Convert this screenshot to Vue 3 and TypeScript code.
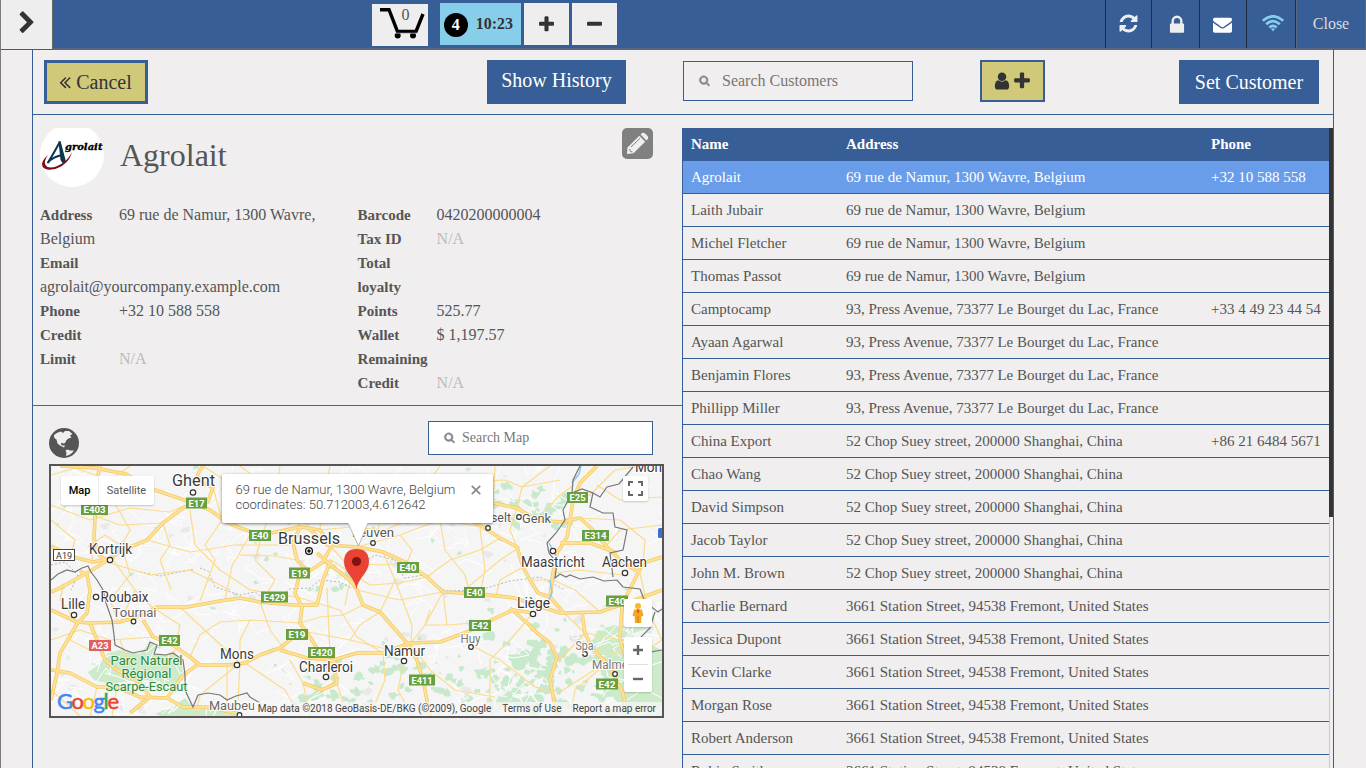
<script setup lang="ts">
interface Customer { name: string; address: string; phone?: string }
interface Field { label: string; value?: string }
interface Place { t: string; x: number; y: number; w: number; s: number; dx?: number; dy?: number; c?: string }
interface Shield { t: string; x: number; y: number; w: number; c?: string }

const namur = '69 rue de Namur, 1300 Wavre, Belgium'
const press = '93, Press Avenue, 73377 Le Bourget du Lac, France'
const suey = '52 Chop Suey street, 200000 Shanghai, China'
const station = '3661 Station Street, 94538 Fremont, United States'

const customers: Customer[] = [
  { name: 'Agrolait', address: namur, phone: '+32 10 588 558' },
  { name: 'Laith Jubair', address: namur },
  { name: 'Michel Fletcher', address: namur },
  { name: 'Thomas Passot', address: namur },
  { name: 'Camptocamp', address: press, phone: '+33 4 49 23 44 54' },
  { name: 'Ayaan Agarwal', address: press },
  { name: 'Benjamin Flores', address: press },
  { name: 'Phillipp Miller', address: press },
  { name: 'China Export', address: suey, phone: '+86 21 6484 5671' },
  { name: 'Chao Wang', address: suey },
  { name: 'David Simpson', address: suey },
  { name: 'Jacob Taylor', address: suey },
  { name: 'John M. Brown', address: suey },
  { name: 'Charlie Bernard', address: station },
  { name: 'Jessica Dupont', address: station },
  { name: 'Kevin Clarke', address: station },
  { name: 'Morgan Rose', address: station },
  { name: 'Robert Anderson', address: station },
  { name: 'Robin Smith', address: station },
]

const leftFields: Field[] = [
  { label: 'Address', value: '69 rue de Namur, 1300 Wavre, Belgium' },
  { label: 'Email', value: 'agrolait@yourcompany.example.com' },
  { label: 'Phone', value: '+32 10 588 558' },
  { label: 'Credit Limit' },
]
const rightFields: Field[] = [
  { label: 'Barcode', value: '0420200000004' },
  { label: 'Tax ID' },
  { label: 'Total loyalty Points', value: '525.77' },
  { label: 'Wallet', value: '$ 1,197.57' },
  { label: 'Remaining Credit' },
]

const icons = {
  plus: 'M1600 736v192q0 40-28 68t-68 28h-416v416q0 40-28 68t-68 28h-192q-40 0-68-28t-28-68v-416h-416q-40 0-68-28t-28-68v-192q0-40 28-68t68-28h416v-416q0-40 28-68t68-28h192q40 0 68 28t28 68v416h416q40 0 68 28t28 68z',
  minus: 'M1600 736v192q0 40-28 68t-68 28h-1216q-40 0-68-28t-28-68v-192q0-40 28-68t68-28h1216q40 0 68 28t28 68z',
  lock: 'M640 768h512v-192q0-106-75-181t-181-75-181 75-75 181v192zm832 96v576q0 40-28 68t-68 28h-960q-40 0-68-28t-28-68v-576q0-40 28-68t68-28h32v-192q0-184 132-316t316-132 316 132 132 316v192h32q40 0 68 28t28 68z',
  mail: 'M1792 710v794q0 66-47 113t-113 47h-1472q-66 0-113-47t-47-113v-794q44 49 101 87 362 246 497 345 57 42 92.5 65.5t94.5 48 110 24.5h2q51 0 110-24.5t94.5-48 92.5-65.5q170-123 498-345 57-39 100-87zm0-294q0 79-49 151t-122 123q-376 261-468 325-10 7-42.5 31t-54 38.5-52 32.5-57.5 27-50 9h-2q-23 0-50-9t-57.5-27-52-32.5-54-38.5-42.5-31q-91-64-262-182.5t-205-142.5q-62-42-117-115.5t-55-136.5q0-78 41.5-130t118.5-52h1472q65 0 112.5 47t47.5 113z',
  refresh: 'M1639 1056q0 5-1 7-64 268-268 434.5t-478 166.5q-146 0-282.5-55t-243.5-157l-129 129q-19 19-45 19t-45-19-19-45v-448q0-26 19-45t45-19h448q26 0 45 19t19 45-19 45l-137 137q71 66 161 102t187 36q134 0 250-65t186-179q11-17 53-117 8-23 30-23h192q13 0 22.5 9.5t9.5 22.5zm25-800v448q0 26-19 45t-45 19h-448q-26 0-45-19t-19-45 19-45l138-138q-148-137-349-137-134 0-250 65t-186 179q-11 17-53 117-8 23-30 23h-199q-13 0-22.5-9.5t-9.5-22.5v-7q65-268 270-434.5t480-166.5q146 0 284 55.5t245 156.5l130-129q19-19 45-19t45 19 19 45z',
  user: 'M1536 1399q0 109-62.5 187t-150.5 78h-854q-88 0-150.5-78t-62.5-187q0-85 8.5-160.5t31.5-152 58.5-131 94-89 134.5-34.5q131 128 313 128t313-128q76 0 134.5 34.5t94 89 58.5 131 31.5 152 8.5 160.5zm-256-887q0 159-112.5 271.5t-271.5 112.5-271.5-112.5-112.5-271.5 112.5-271.5 271.5-112.5 271.5 112.5 112.5 271.5z',
  search: 'M1216 832q0-185-131.5-316.5t-316.5-131.5-316.5 131.5-131.5 316.5 131.5 316.5 316.5 131.5 316.5-131.5 131.5-316.5zm512 832q0 52-38 90t-90 38q-54 0-90-38l-343-342q-179 124-399 124-143 0-273.5-55.5t-225-150-150-225-55.5-273.5 55.5-273.5 150-225 225-150 273.5-55.5 273.5 55.5 225 150 150 225 55.5 273.5q0 220-124 399l343 343q37 37 37 90z',
  chevron: 'M1363 877l-742 742q-19 19-45 19t-45-19l-166-166q-19-19-19-45t19-45l531-531-531-531q-19-19-19-45t19-45l166-166q19-19 45-19t45 19l742 742q19 19 19 45t-19 45z',
  dleft: 'M1011 1376q0 13-10 23l-50 50q-10 10-23 10t-23-10l-466-466q-10-10-10-23t10-23l466-466q10-10 23-10t23 10l50 50q10 10 10 23t-10 23l-393 393 393 393q10 10 10 23zm384 0q0 13-10 23l-50 50q-10 10-23 10t-23-10l-466-466q-10-10-10-23t10-23l466-466q10-10 23-10t23 10l50 50q10 10 10 23t-10 23l-393 393 393 393q10 10 10 23z',
}

// Motorways, in the map's own coordinate space (viewBox 51 466 611 250).
const motorways: string[] = [
  'M100 466L97 480L95 516L94 540L100 556L110 562',
  'M60 466L95 468L126 474L155 490L187 501L210 510L225 521L240 528L262 535L285 530L300 527',
  'M203 466Q194 478 198 482L213 487L208 502L196 503L183 508L163 523L147 540L123 550L97 567L62 587L51 592',
  'M51 546L73 557L93 562L113 558',
  'M90 623L120 622L140 616L157 607L187 607L220 601L240 598L260 602L293 605L317 605L323 580L331 560',
  'M143 620L153 637L173 645L190 657L200 665L227 665L245 663L260 655L280 648L290 640L302 630',
  'M51 610L77 622L90 623',
  'M80 571L87 575L90 590L87 613L77 624L60 653L57 673L51 700',
  'M90 623L97 640L105 660L117 670L140 683L150 697L130 713',
  'M51 670L70 673L97 687L117 687L140 697L167 698L183 675L197 665',
  'M167 698L183 707L207 707L235 713',
  'M300 527L293 543L297 560L308 572L323 562L331 547L320 530Z',
  'M307 527L327 545L357 547L383 552L407 563L427 577L443 592L480 594L515 598L560 613L600 612L635 600L662 590',
  'M317 553L333 567L350 580L357 590L363 605L380 612L393 627L407 643L417 660L423 680L430 716',
  'M300 572L295 593L302 607L300 623L310 637L323 658L337 663',
  'M280 650L307 658L333 660L357 653L383 653L410 643L440 642L467 632L487 622L513 610L533 613',
  'M303 683L322 690L337 683L333 660',
  'M493 503L517 508L537 520L560 522L580 518L593 530L607 547L622 562L640 573',
  'M597 466L580 483L573 500L570 520L567 537L557 553L553 573L550 597',
  'M460 515L483 527L500 538L517 547L523 567L530 580L538 593L550 597L563 612',
  'M560 543L590 543L617 553',
  'M662 557L643 563L633 583L622 605L620 640L628 665',
  'M510 608L527 623L537 633L550 643L557 657L550 680L557 716',
  'M582 613L585 633L593 650L607 663L623 693L627 716',
]
const roads: string[] = [
  'M51 475L75 468L110 480L130 466', 'M51 505L90 520L130 508L170 512L197 500', 'M113 500L130 530L113 560L135 590L152 607',
  'M147 540L190 552L235 545L290 545', 'M190 510L195 545L220 570L250 590L297 597', 'M225 600L232 566L250 535',
  'M110 563L150 575L190 570L230 590', 'M152 607L180 625L175 650L160 680', 'M180 607L210 635L240 663L238 700',
  'M245 663L285 690L300 716', 'M240 663L200 695L195 716', 'M227 665L227 716', 'M260 602L270 630L285 650',
  'M300 623L320 617L343 615L363 605', 'M297 597L340 610L357 637L383 653', 'M327 588L330 655',
  'M308 632L350 640L390 650', 'M357 547L400 535L440 520L483 527', 'M373 545L385 505L420 495L440 466',
  'M383 552L395 580L380 612', 'M395 580L412 625L411 643', 'M443 592L425 625L411 643', 'M443 592L447 625L487 622',
  'M460 594L500 560L520 547', 'M480 527L485 570L480 594', 'M493 503L495 466', 'M517 508L522 487L550 466',
  'M537 520L560 495L574 485', 'M597 485L620 500L662 497', 'M580 518L620 520L645 540L643 563', 'M606 546L620 530L662 525',
  'M553 573L580 570L622 575', 'M533 613L510 640L490 660L490 697L480 716', 'M404 660L398 690L412 716', 'M467 643L500 660L535 687L560 692L605 663',
  'M410 643L430 670L455 690L495 697', 'M337 683L342 700L350 716', 'M303 683L310 716', 'M563 612L585 633L620 640',
  'M51 520L75 540L70 557', 'M51 640L80 630L110 640L153 637', 'M51 690L80 716', 'M97 687L90 716', 'M117 687L112 716',
  'M585 633L560 660L557 657', 'M593 650L640 655L662 640', 'M607 663L575 690L570 716', 'M357 590L400 600L443 592',
  'M323 562L350 580L345 605', 'M203 466L240 490L290 525', 'M240 466L285 500L300 527', 'M280 466L275 500L262 535',
  'M330 466L322 500L320 530', 'M640 573L648 610L662 640', 'M95 516L120 525L163 523', 'M135 590L120 622',
  'M213 487L222 520L205 545L215 560L200 601', 'M163 523L170 545L160 560L171 590', 'M123 550L130 575L110 600L118 622',
  'M262 535L255 560L275 580L262 602', 'M240 555L275 556L297 560', 'M331 547L345 562L380 565L407 563',
  'M331 560L370 585L400 583L427 577', 'M320 530L350 527L385 530L420 515L460 515', 'M400 535L412 550L407 563',
  'M440 520L445 550L465 575L470 594', 'M500 538L480 550L450 560L427 577', 'M523 567L500 580L496 596',
  'M530 580L553 580L575 590L600 612', 'M350 640L360 625L380 612', 'M430 610L425 625L447 625', 'M250 620L240 640L240 660',
  'M190 657L200 635L220 622L250 620L300 623', 'M120 640L125 655L140 665L140 683', 'M63 587L60 600L77 622L70 640L90 650L97 640',
  'M93 562L90 545L105 535L120 545L113 560', 'M567 500L590 495L615 470L640 466', 'M517 508L510 530L517 547',
  'M455 500L470 482L505 480L522 487L560 480', 'M333 660L325 675L337 683', 'M290 660L303 683', 'M383 653L385 680L370 716',
]
const frontiers: string[] = [
  'M51 580L58 574L67 570L75 572L82 568L88 566L91 572L97 580L103 590L106 603L112 620L114 635L115 645L125 650L133 653L147 650L150 642L157 645L154 654L166 655L173 653L183 660L185 675L185 690L193 707L198 695L208 693L220 695L227 700L236 696L247 693L250 697L260 703',
  'M580 466L573 480L572 493L563 510L565 520L556 533L547 543L549 553L557 563L555 578L560 574L566 577L570 575L580 579L593 577L604 581L617 580L623 587L640 589L645 602L658 612L662 609',
  'M572 493L582 489L593 493L590 507L603 513L613 513L615 527L627 530L623 550L610 553L613 577',
  'M593 493L600 497L607 487L619 484L633 467',
  'M662 650L650 652L640 638L650 628L655 612',
]
const dotted: string[] = [
  'M200 568L208 571L215 587L240 595L255 592L271 605L290 589L310 588L320 580L340 582L352 588',
  'M51 565L65 562L78 575L71 590', 'M352 570L375 555L395 560L404 578L425 575L445 591L480 590L510 581L540 577L565 590',
  'M140 572L160 576L195 569',
]

// Seeded generator, so that the small streets and woods fall in the same place on every render.
let seed = 9
function rnd(): number {
  seed = (seed * 16807) % 2147483647
  return seed / 2147483647
}
const streets: string[] = Array.from({ length: 230 }, () => {
  let x = 51 + rnd() * 611
  let y = 466 + rnd() * 250
  let d = `M${x.toFixed(0)} ${y.toFixed(0)}`
  for (let i = 0; i < 4; i++) {
    x += (rnd() - 0.5) * 36
    y += (rnd() - 0.5) * 30
    d += `L${x.toFixed(0)} ${y.toFixed(0)}`
  }
  return d
})
function blob(x: number, y: number, r: number): string {
  const pts: string[] = []
  for (let i = 0; i < 9; i++) {
    const a = (i / 9) * Math.PI * 2
    const k = r * (0.4 + rnd() * 0.9)
    pts.push(`${(x + Math.cos(a) * k * 1.2).toFixed(1)} ${(y + Math.sin(a) * k).toFixed(1)}`)
  }
  return `M${pts.join('L')}Z`
}
const woods: string[] = [
  ...Array.from({ length: 60 }, () => blob(51 + rnd() * 611, 466 + rnd() * 250, 1 + rnd() * 2)),
  ...Array.from({ length: 120 }, () => blob(300 + rnd() * 260, 655 + rnd() * 60, 1.5 + rnd() * 3.5)),
  ...Array.from({ length: 90 }, () => blob(480 + rnd() * 180, 625 + rnd() * 90, 2 + rnd() * 5)),
  ...Array.from({ length: 28 }, () => blob(490 + rnd() * 90, 480 + rnd() * 50, 2 + rnd() * 5)),
  ...Array.from({ length: 14 }, () => blob(315 + rnd() * 40, 560 + rnd() * 30, 2 + rnd() * 3)),
]
const towns: string[] = Array.from({ length: 90 }, () => blob(51 + rnd() * 611, 466 + rnd() * 250, 1.5 + rnd() * 3))

const places: Place[] = [
  { t: 'Ghent', x: 193.5, y: 486, w: 43, s: 16.5, dx: 193, dy: 492.5 },
  { t: 'Kortrijk', x: 110.5, y: 554, w: 43, s: 14, dx: 110, dy: 560 },
  { t: 'Roubaix', x: 124.5, y: 602, w: 48, s: 14, dx: 96, dy: 597 },
  { t: 'Lille', x: 73, y: 609, w: 24, s: 14, dx: 74, dy: 615 },
  { t: 'Tournai', x: 134.5, y: 617, w: 44, s: 13.5, dx: 133.5, dy: 621.5, c: '#666' },
  { t: 'Mons', x: 237, y: 659, w: 34, s: 14, dx: 237, dy: 665 },
  { t: 'Maubeu', x: 232, y: 710, w: 46, s: 13.5, dx: 239.5, dy: 715, c: '#666' },
  { t: 'Brussels', x: 309, y: 543.5, w: 62, s: 16.5 },
  { t: 'Leuven', x: 373, y: 537, w: 42, s: 13.5, dx: 373, dy: 543, c: '#555' },
  { t: 'Charleroi', x: 326, y: 672, w: 54, s: 14, dx: 326, dy: 677 },
  { t: 'Namur', x: 404.5, y: 656, w: 41, s: 14, dx: 404, dy: 661 },
  { t: 'Hasselt', x: 490, y: 522, w: 42, s: 13.5, dx: 488, dy: 528, c: '#555' },
  { t: 'Genk', x: 536.5, y: 523, w: 29, s: 13.5, dx: 519, dy: 517, c: '#555' },
  { t: 'Maastricht', x: 553, y: 567, w: 64, s: 14, dx: 553, dy: 551 },
  { t: 'Aachen', x: 624.5, y: 567, w: 45, s: 14, dx: 625, dy: 573 },
  { t: 'Liège', x: 533.5, y: 608, w: 33, s: 14, dx: 533, dy: 614 },
  { t: 'Huy', x: 470.5, y: 643, w: 20, s: 13, dx: 471, dy: 647, c: '#777' },
  { t: 'Spa', x: 584.5, y: 650, w: 18, s: 12.5, dx: 585, dy: 654, c: '#777' },
  { t: 'Malmedy', x: 616, y: 669, w: 48, s: 12.5, dx: 615, dy: 674, c: '#777' },
  { t: 'Mon', x: 648.5, y: 472, w: 27, s: 14 },
]
const shields: Shield[] = [
  { t: 'E403', x: 81, y: 504, w: 27 }, { t: 'E17', x: 186, y: 497.5, w: 21 }, { t: 'E42', x: 159, y: 635, w: 21 },
  { t: 'A23', x: 89, y: 640, w: 22, c: '#e06060' }, { t: 'E40', x: 249, y: 530, w: 22 }, { t: 'E19', x: 289, y: 567.5, w: 21 },
  { t: 'E429', x: 261, y: 591.5, w: 27 }, { t: 'E40', x: 397, y: 562, w: 22 }, { t: 'E19', x: 286, y: 629, w: 22 },
  { t: 'E420', x: 308, y: 647, w: 27 }, { t: 'E411', x: 409, y: 674.5, w: 26 }, { t: 'E25', x: 567, y: 492, w: 21 },
  { t: 'E314', x: 582, y: 530, w: 27 }, { t: 'E40', x: 464, y: 587, w: 21 }, { t: 'E40', x: 606, y: 595.5, w: 22 },
  { t: 'E42', x: 469, y: 620, w: 22 }, { t: 'E42', x: 596, y: 678.5, w: 22 },
]
</script>

<template>
  <div class="app">
    <header class="topbar">
      <button class="expand"><svg class="i24" viewBox="0 0 1792 1792"><path :d="icons.chevron" /></svg></button>
      <div class="orders">
        <button class="cart">
          <svg viewBox="0 0 56 42"><path d="M8 5.700H17L25.500 27.500H44L51 10" fill="none" stroke="#000" stroke-width="3.400" /><circle cx="25.700" cy="31.500" r="3" /><circle cx="41" cy="31.500" r="3" /><path d="M22 29.200H46" stroke="#eee" stroke-width=".6" /></svg>
          <span class="count">0</span>
        </button>
        <div class="tabs">
          <button class="order"><span class="num">4</span><span>10:23</span></button>
          <button class="sq"><svg class="i19" viewBox="0 0 1792 1792"><path :d="icons.plus" /></svg></button>
          <button class="sq"><svg class="i19" viewBox="0 0 1792 1792"><path :d="icons.minus" /></svg></button>
        </div>
      </div>
      <nav class="status">
        <span class="cell c1"><svg class="i21" viewBox="0 0 1792 1792"><path :d="icons.refresh" /></svg></span>
        <span class="cell c2"><svg class="i22" viewBox="0 0 1792 1792"><path :d="icons.lock" /></svg></span>
        <span class="cell c3"><svg class="i19" viewBox="0 0 1792 1792"><path :d="icons.mail" /></svg></span>
        <span class="cell c4">
          <svg class="wifi" viewBox="0 0 22 17" fill="none" stroke="#87ceeb" stroke-width="2.700">
            <path d="M.8 5.800Q11-3.200 21.200 5.800M4.200 9.300Q11 3 17.800 9.300M7.400 12.600Q11 9.200 14.600 12.600" /><path d="M9 13.900Q11 12.500 13 13.900L11 16.300Z" fill="#87ceeb" stroke="none" />
          </svg>
        </span>
        <span class="cell close">Close</span>
      </nav>
    </header>

    <main class="pane">
      <div class="actions">
        <button class="btn cancel"><svg class="i20" viewBox="300 0 1192 1792"><path :d="icons.dleft" /></svg>Cancel</button>
        <button class="btn history">Show History</button>
        <div class="search"><svg class="i12" viewBox="0 0 1792 1792"><path :d="icons.search" /></svg>Search Customers</div>
        <button class="btn add"><svg class="i20" viewBox="0 0 1792 1792"><path :d="icons.user" /></svg><svg class="i20" viewBox="0 0 1792 1792"><path :d="icons.plus" /></svg></button>
        <button class="btn set">Set Customer</button>
      </div>

      <div class="columns">
        <section class="left">
          <div class="details">
            <div class="head">
              <div class="avatar">
                <svg viewBox="40 128 64 59">
                  <circle cx="72" cy="155" r="32" fill="#fff" />
                  <path d="M48 162.500Q54 153 59.500 142.500Q61.500 152 64 161.500M48 162.500Q53 156.500 63 155" fill="none" stroke="#0d3450" stroke-width="2" stroke-linecap="round" stroke-linejoin="round" />
                  <path d="M58.500 141.500L60.500 141L65.800 161L63 163.800L60.500 160Z" fill="#0d3450" />
                  <text x="65" y="149.500" class="logo-t" textLength="37.500" lengthAdjust="spacingAndGlyphs">grolait</text>
                  <path d="M48 155Q38 164 44.500 168.500C54 173 70 164 71.800 152C68 162 55 169.500 47.500 167Q42 164 48 155Z" fill="#7d0f1c" />
                </svg>
              </div>
              <h1>Agrolait</h1>
              <svg class="edit" viewBox="0 0 31 31">
                <rect width="31" height="31" rx="5" fill="#808080" />
                <g fill="#f0eeee"><path d="M17.300 7.800L23.200 13.700L11.500 25.300L5 26L5.500 19.500Z" /><path d="M18.600 6.500L20 5.100Q21.500 4 23.300 5.700L25.400 7.800Q26.900 9.600 25.800 11L24.500 12.400Z" /></g>
                <path d="M9 19L18 10.300M7.500 21L8.500 23.500L10.500 24" fill="none" stroke="#808080" stroke-width="1" />
              </svg>
            </div>
            <div class="fields">
              <div class="col col-a">
                <div v-for="f in leftFields" :key="f.label" class="field"><b>{{ f.label }}</b><span :class="{ na: !f.value }">{{ f.value ?? 'N/A' }}</span></div>
              </div>
              <div class="col col-b">
                <div v-for="f in rightFields" :key="f.label" class="field"><b>{{ f.label }}</b><span :class="{ na: !f.value }">{{ f.value ?? 'N/A' }}</span></div>
              </div>
            </div>
          </div>

          <div class="maptools">
            <svg class="globe" viewBox="0 0 30 30">
              <circle cx="15" cy="15" r="15" fill="#555" />
              <path d="M5 7Q8 4 12 3.500L14 5L16 3L20 3L23.500 6L21 7.500L22.500 9.500L19.500 10.500L17.500 12L16 15L14 15.500L12.500 14.500L12 16.500L13.500 17.500L16 17.500L15 19.500L11 17.500L8.500 15.500L7.500 11.500Q4.500 10 5 7Z" fill="#f0eeee" />
              <path d="M16.500 22.500L18.500 21.500L21 22.500L25 22.500L23 25Q20 27.500 17 28L17.500 25Z" fill="#f0eeee" />
            </svg>
            <div class="search mapsearch"><svg class="i12" viewBox="0 0 1792 1792"><path :d="icons.search" /></svg>Search Map</div>
          </div>

          <div class="map">
            <svg class="canvas" viewBox="51 466 611 250">
              <rect x="51" y="466" width="611" height="250" fill="#f5f5f5" />
              <path v-for="(d, i) in towns" :key="'t' + i" :d="d" fill="#e9e9e9" />
              <path v-for="(d, i) in woods" :key="'w' + i" :d="d" fill="#c9e9cd" />
              <path d="M88 672L100 664L108 653L120 650L140 654L150 642L157 645L154 654L173 653L182 662L183 680L170 684L165 690L148 680L130 681L110 684L94 680Z" fill="#cdebca" />
              <path d="M155 714L175 705L185 698L195 710L235 704L240 716L160 716Z" fill="#cdebca" />
              <path d="M597 630L615 625L640 640L662 650V716H622L610 690L590 650Z" fill="#cdebca" />
              <path d="M640 600L655 612L650 628L630 634L622 606Z" fill="#cdebca" />
              <path v-for="(d, i) in streets" :key="'s' + i" :d="d" class="street" />
              <path v-for="(d, i) in dotted" :key="'d' + i" :d="d" class="dots" />
              <path v-for="(d, i) in roads" :key="'r' + i" :d="d" class="road" />
              <path v-for="(d, i) in motorways" :key="'m' + i" :d="d" class="way-case" />
              <path v-for="(d, i) in motorways" :key="'n' + i" :d="d" class="way" />
              <path d="M581 466L579 474L572 483M549 543L557 558M550 580L552 592L549 600" fill="none" stroke="#8cc8f0" stroke-width="1.500" />
              <path v-for="(d, i) in frontiers" :key="'f' + i" :d="d" class="frontier" />
              <rect x="658" y="528" width="6" height="10" rx="1.500" fill="#3a6fd0" />
              <g v-for="(s, i) in shields" :key="'h' + i">
                <rect :x="s.x" :y="s.y" :width="s.w" height="11" :fill="s.c ?? '#66a03f'" />
                <text :x="s.x + s.w / 2" :y="s.y + 9" :textLength="s.w - 5" lengthAdjust="spacingAndGlyphs" class="shield">{{ s.t }}</text>
              </g>
              <rect x="53.500" y="549.500" width="21" height="11" fill="#fff" stroke="#444" />
              <text x="64" y="558.500" class="shield-w" textLength="16">A19</text>
              <g v-for="(p, i) in places" :key="'p' + i">
                <circle v-if="p.dx" :cx="p.dx" :cy="p.dy" :r="p.c ? 2.3 : 2.7" fill="#fff" stroke="#333" stroke-width="1.200" />
                <text :x="p.x" :y="p.y" :font-size="p.s" :textLength="p.w" lengthAdjust="spacingAndGlyphs" :fill="p.c ?? '#3a3a3a'" class="place">{{ p.t }}</text>
              </g>
              <circle cx="309" cy="551" r="3.400" fill="#fff" stroke="#111" stroke-width="1.300" /><circle cx="309" cy="551" r="1.700" fill="#111" />
              <g class="park">
                <text x="146.500" y="664.500" textLength="72" lengthAdjust="spacingAndGlyphs">Parc Naturel</text>
                <text x="146.500" y="677.500" textLength="50" lengthAdjust="spacingAndGlyphs">Régional</text>
                <text x="146.500" y="690.500" textLength="82" lengthAdjust="spacingAndGlyphs">Scarpe-Escaut</text>
              </g>
              <text x="57" y="709" textLength="62" class="google"><tspan class="gb">G</tspan><tspan class="gr">o</tspan><tspan class="gy">o</tspan><tspan class="gb">g</tspan><tspan class="gg">l</tspan><tspan class="gr">e</tspan></text>
              <path d="M356.500 589.500C355.500 578 344 573 344 562Q344 549 356.500 549Q369 549 369 562C369 573 357.500 578 356.500 589.500Z" fill="#ea4335" /><circle cx="356.500" cy="561.500" r="4.600" fill="#811411" />
            </svg>
            <div class="types"><span class="on">Map</span><span>Satellite</span></div>
            <div class="info">
              <div>69 rue de Namur, 1300 Wavre, Belgium<br />coordinates: 50.712003,4.612642</div>
              <svg class="x" viewBox="0 0 9 9"><path d="M.7.7L8.300 8.300M8.300.7L.7 8.300" stroke="#8a8a8a" stroke-width="1.600" /></svg>
              <svg class="tail" viewBox="0 0 20 24"><path d="M0 0L10.500 23L20 0" fill="#fff" stroke="#aaa" stroke-width=".8" /></svg>
            </div>
            <div class="ctl full"><svg viewBox="0 0 15 15"><path d="M1 5V1H5M10 1H14V5M14 10V14H10M5 14H1V10" fill="none" stroke="#666" stroke-width="2" /></svg></div>
            <div class="ctl man">
              <svg viewBox="0 0 12 20"><circle cx="6" cy="3" r="3" fill="#fbb62a" /><path d="M2 6.500H10L11.500 13H9.500L9 20H3L2.500 13H.5Z" fill="#f5a623" /><path d="M4.500 6.500H7.500L6.500 10H5.500Z" fill="#e04b1f" /><path d="M6 13V20" stroke="#c27b10" stroke-width=".8" /></svg>
            </div>
            <div class="ctl zoom">
              <svg viewBox="0 0 10 10"><path d="M5 0V10M0 5H10" stroke="#666" stroke-width="2.400" /></svg>
              <i></i>
              <svg viewBox="0 0 10 10"><path d="M0 5H10" stroke="#666" stroke-width="2.400" /></svg>
            </div>
            <div class="legal"><span>Map data ©2018 GeoBasis-DE/BKG (©2009), Google</span><span>Terms of Use</span><span>Report a map error</span></div>
          </div>
        </section>

        <section class="list">
          <div class="table">
            <div class="row th"><span>Name</span><span>Address</span><span>Phone</span></div>
            <div v-for="(c, i) in customers" :key="c.name" class="row" :class="{ active: i === 0 }"><span>{{ c.name }}</span><span>{{ c.address }}</span><span>{{ c.phone }}</span></div>
          </div>
          <div class="bar"><div class="thumb"></div></div>
        </section>
      </div>
    </main>
  </div>
</template>

<style>
html, body { margin: 0; overflow: hidden; background: #f0eeee; }
</style>

<style scoped>
* { box-sizing: border-box; }
.app { width: 1366px; height: 768px; overflow: hidden; display: flex; flex-direction: column; background: #f0eeee; color: #555; font: 16px "Liberation Serif", serif; border-left: 1px solid #7d7d7d; }
button { font: inherit; color: inherit; border: 0; padding: 0; margin: 0; display: flex; align-items: center; justify-content: center; }
svg { display: block; flex: none; }
.i12 { width: 12px; height: 12px; } .i19 { width: 19px; height: 19px; } .i20 { width: 20px; height: 20px; }
.i21 { width: 21px; height: 21px; } .i22 { width: 22px; height: 22px; } .i24 { width: 24px; height: 24px; }

.topbar { flex: none; height: 50px; display: flex; background: #375e97; border-bottom: 2px solid #59687f; }
.expand { width: 52px; height: 50px; background: #eee; border-right: 1px solid #666; border-bottom: 1px solid #375e97; fill: #333; padding-bottom: 3px; }
.orders { display: flex; margin-left: 319px; }
.cart { position: relative; width: 56px; height: 42px; margin-top: 4px; background: #eee; }
.cart svg { width: 56px; height: 42px; }
.count { position: absolute; left: 0; width: 67px; top: 1px; text-align: center; line-height: 20px; }
.tabs { display: flex; gap: 3px; height: 48px; margin-left: 11px; padding-top: 3px; border-left: 1px solid #465a7a; }
.order { width: 81px; height: 42px; background: #87ceeb; font-weight: bold; color: #333; gap: 8px; padding: 0 8px 0 4px; justify-content: flex-start; }
.num { width: 24px; height: 24px; margin-top: 2px; border-radius: 50%; background: #000; color: #fff; line-height: 23px; text-align: center; }
.sq { width: 45px; height: 42px; background: #eee; fill: #333; }
.status { margin-left: auto; display: flex; height: 48px; border-right: 1px solid #59687f; }
.cell { display: flex; align-items: center; justify-content: center; border-left: 1px solid #1f2d44; fill: #eee; color: #ddd; }
.c1 { width: 46px; } .c1 svg { margin-bottom: 1px; } .c2 { width: 48px; padding-left: 3px; } .c2 svg { margin: 2px 0 0; } .c3 { width: 47px; fill: #fff; padding-right: 1px; } .c3 svg { margin-top: 1px; } .c4 { width: 49px; padding-left: 3px; }
.wifi { width: 22px; height: 17px; margin-bottom: 2px; }
.close { width: 70px; box-shadow: inset 1px 0 #59687f; padding-left: 1px; }

.pane { flex: 1; min-height: 0; width: 1302px; margin-left: 31px; border: solid #375e97; border-width: 0 1px; display: flex; flex-direction: column; }
.actions { flex: none; height: 65px; display: flex; align-items: flex-start; padding: 10px 14px 0 11px; border-bottom: 1px solid #375e97; }
.btn { height: 44px; font-size: 20px; line-height: 22px; flex: none; }
.cancel { width: 104px; background: #d1c97a; border: 3px solid #375e97; color: #333; fill: #333; gap: 4px; padding-right: 2px; }
.cancel svg { width: 14px; }
.history, .set { background: #375e97; color: #fff; }
.history { width: 139px; margin-left: 339px; padding-bottom: 4px; }
.set { width: 140px; margin-left: auto; }
.search { display: flex; align-items: center; border: 1px solid #375e97; width: 230px; height: 40px; margin: 1px 0 0 57px; padding-left: 15px; color: #777; fill: #888; gap: 11px; }
.search svg { stroke: #888; stroke-width: 90; overflow: visible; margin-bottom: 1px; width: 11px; height: 11px; margin-right: 1px; }
.add { width: 65px; height: 42px; margin-left: 67px; padding-right: 2px; background: #d1c97a; border: 2px solid #375e97; fill: #333; }

.columns { flex: 1; min-height: 0; display: flex; }
.left { width: 649px; display: flex; flex-direction: column; }
.details { height: 291px; padding: 13px 7px 0; border-bottom: 1px solid #55647e; }
.head { display: flex; height: 75px; align-items: flex-start; }
.avatar, .avatar svg { width: 64px; height: 59px; }
.logo-t { font: italic bold 9.500px "DejaVu Serif", serif; fill: #000; stroke: #000; stroke-width: .3; }
h1 { margin: 8px 0 0 16px; font-size: 32px; line-height: 38px; font-weight: normal; }
.edit { width: 31px; height: 31px; margin-left: auto; margin-right: 22px; }
.fields { display: flex; }
.col { line-height: 24px; }
.col-a { width: 317.600px; padding-right: 30px; }
.field b { display: inline-block; width: 75px; margin-right: 4px; font-size: 15px; vertical-align: bottom; }
.col-b { width: 230px; }
.na { color: #bbb; }
.maptools { display: flex; height: 58px; padding: 15px 29px 0 16px; justify-content: space-between; }
.globe { width: 30px; height: 30px; margin-top: 7px; }
.mapsearch { width: 225px; height: 34px; margin: 0; background: #fff; font-size: 14px; gap: 6px; }

.map { position: relative; width: 615px; height: 254px; margin-left: 16px; border: 2px solid #555; overflow: hidden; font-family: Roboto, sans-serif; }
.canvas { width: 611px; height: 250px; }
.street { fill: none; stroke: #fff; stroke-width: 1; }
.road { fill: none; stroke: #fbdc8c; stroke-width: 1.200; stroke-linejoin: round; }
.way-case { fill: none; stroke: #f6c765; stroke-width: 3.600; stroke-linejoin: round; }
.way { fill: none; stroke: #fde293; stroke-width: 2.200; stroke-linejoin: round; }
.frontier { fill: none; stroke: #777; stroke-width: 1.200; }
.dots { fill: none; stroke: #b5b5b5; stroke-width: 1; stroke-dasharray: 2 2; }
.place { text-anchor: middle; stroke: #fff; stroke-width: 2; paint-order: stroke; }
.shield { font-size: 9.500px; font-weight: bold; fill: #fff; text-anchor: middle; }
.shield-w { font-size: 9px; fill: #333; text-anchor: middle; }
.park { font-size: 13px; fill: #2b8a3a; text-anchor: middle; stroke: #e8f6e6; stroke-width: 1.500; paint-order: stroke; }
.google { font: 22px Lato, sans-serif; stroke-width: .5; }
.gb { fill: #4285f4; stroke: #4285f4; } .gr { fill: #ea4335; stroke: #ea4335; } .gy { fill: #fbbc05; stroke: #fbbc05; } .gg { fill: #34a853; stroke: #34a853; }
.types { position: absolute; left: 10px; top: 10px; height: 29px; display: flex; background: #fff; border-radius: 2px; box-shadow: 0 1px 2px rgba(0,0,0,.2); font-size: 11px; line-height: 29px; color: #565656; }
.types span { width: 55px; text-align: center; }
.types .on { width: 38px; font-weight: 500; color: #000; border-right: 1px solid #eee; }
.info { position: absolute; left: 171px; top: 8px; width: 271px; height: 49px; padding: 8px 0 0 13.500px; background: #fff; border-radius: 2px; box-shadow: 0 1px 3px rgba(0,0,0,.5); font-size: 13px; line-height: 15px; font-weight: 300; color: #444; white-space: nowrap; }
.x { position: absolute; right: 12.500px; top: 10.500px; width: 10px; height: 10px; }
.tail { position: absolute; left: 126px; top: 49px; width: 20px; height: 24px; }
.ctl { position: absolute; background: #fff; border-radius: 2px; display: flex; flex-direction: column; align-items: center; justify-content: center; box-shadow: 0 1px 2px rgba(0,0,0,.2); }
.full { left: 572px; top: 10px; width: 25px; height: 25px; } .full svg { width: 15px; height: 15px; }
.man { left: 573px; top: 133px; width: 28px; height: 28px; } .man svg { width: 12px; height: 20px; }
.zoom { left: 573px; top: 171px; width: 28px; height: 55px; justify-content: space-between; padding: 8px 0; } .zoom svg { width: 10px; height: 10px; } .zoom i { width: 20px; height: 1px; background: #e0e0e0; }
.legal { position: absolute; right: 0; bottom: 0; height: 14px; width: 408px; padding-right: 6px; display: flex; justify-content: flex-end; gap: 11px; background: rgba(245,245,245,.75); font-size: 10px; line-height: 14px; color: #444; white-space: nowrap; }

.list { width: 651px; margin-top: 13px; display: flex; overflow: hidden; }
.table { width: 647px; height: 700px; border-left: 1px solid #375e97; font-size: 15px; }
.row { display: grid; grid-template-columns: 155px 365px 1fr; height: 33px; line-height: 32px; padding-left: 8px; border-bottom: 1px solid #375e97; white-space: nowrap; }
.th { background: #375e97; color: #fff; font-weight: bold; }
.active { background: #6a9de9; color: #fff; }
.bar { width: 4px; border-left: 1px solid #ccc; }
.thumb { width: 4px; height: 389px; margin-left: -1px; background: #333; }
</style>
